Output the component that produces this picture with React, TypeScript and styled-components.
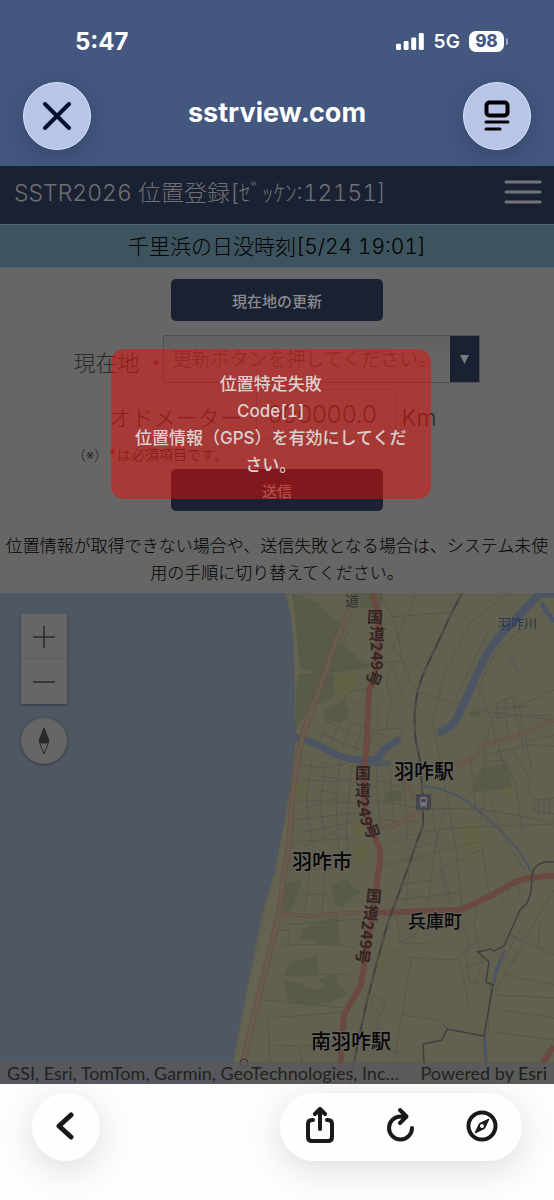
import React from "react";
import styled, { createGlobalStyle } from "styled-components";

const GlobalStyle = createGlobalStyle`
  *, *::before, *::after { box-sizing: border-box; }
  body {
    margin: 0;
    background: #fdfdfd;
    font-family: Inter, "Noto Sans CJK JP", sans-serif;
    font-variant-numeric: tabular-nums;
  }
  button { font-family: inherit; border: 0; padding: 0; cursor: pointer; }
`;

const Screen = styled.div`
  min-height: 100vh;
  display: flex;
  flex-direction: column;
`;

/* Browser chrome, top */
const BrowserTop = styled.header`
  height: 166px;
  background: #43577f;
  color: #fff;
  font-family: Inter, sans-serif;
`;

const StatusBar = styled.div`
  height: 82px;
  padding: 0 50px 0 75px;
  display: flex;
  align-items: center;
  justify-content: space-between;
`;

const Clock = styled.time`
  font-size: 24px;
  font-weight: 700;
  font-variant-numeric: normal;
`;

const StatusIcons = styled.div`
  display: flex;
  align-items: center;
  gap: 9px;
  font-size: 19px;
  font-weight: 600;
`;

const Battery = styled.span`
  position: relative;
  width: 35px;
  height: 21px;
  border-radius: 7px;
  background: #fff;
  color: #43577f;
  font-size: 17px;
  line-height: 21px;
  font-weight: 800;
  text-align: center;
  &::after {
    content: "";
    position: absolute;
    right: -4px;
    top: 7px;
    width: 2px;
    height: 7px;
    border-radius: 0 2px 2px 0;
    background: #9aa8c4;
  }
`;

const AddressRow = styled.div`
  height: 68px;
  padding: 0 23px;
  display: flex;
  align-items: center;
  justify-content: space-between;
`;

const Host = styled.h1`
  margin: 0;
  padding-bottom: 6px;
  font-size: 27px;
  line-height: 32px;
  font-weight: 700;
`;

const GlassButton = styled.button`
  width: 68px;
  height: 68px;
  border-radius: 50%;
  display: grid;
  place-items: center;
  background: #b8c5e6;
  border: 1px solid #d7e6ff;
  color: ${(p) => p.color};
  box-shadow: 0 6px 22px rgba(20, 30, 60, 0.28);
`;

/* Page content, already dimmed while the notice is up */
const Page = styled.main`
  position: relative;
  flex: 1;
  display: flex;
  flex-direction: column;
  background: #666;
`;

const AppBar = styled.div`
  height: 58px;
  padding: 0 12px 4px 14px;
  display: flex;
  align-items: center;
  justify-content: space-between;
  background: #1a2132;
  color: #707072;
`;

const AppTitle = styled.h2`
  margin: 0;
  font-size: 23px;
  line-height: 30px;
  font-weight: 300;
  white-space: nowrap;
`;

const MenuButton = styled.button`
  width: 38px;
  height: 30px;
  background: none;
  color: #737478;
`;

const SunsetBar = styled.div`
  height: 44px;
  border-top: 1px solid #56666c;
  border-bottom: 1px solid #46616c;
  background: #3d545f;
  color: #000;
  font-size: 21px;
  font-weight: 300;
  line-height: 44px;
  text-align: center;
`;

const Form = styled.form`
  padding: 11px 0 0;
  display: flex;
  flex-direction: column;
  align-items: center;
`;

const ActionButton = styled.button`
  width: 212px;
  height: 42px;
  border-radius: 5px;
  background: #1a2132;
  color: #8b8b8e;
  font-size: 15px;
  font-weight: 500;
`;

const FieldRow = styled.div<{ $top: number }>`
  margin-top: ${(p) => p.$top}px;
  display: flex;
  align-items: center;
  color: #2b2b2b;
  font-size: 22px;
  font-weight: 300;
`;

const Label = styled.label`
  line-height: 30px;
  padding-top: 8px;
`;

const Required = styled.span`
  color: #7a1212;
  font-size: 14px;
  line-height: 16px;
`;

const SelectBox = styled.div`
  display: flex;
  width: 317px;
  height: 48px;
  margin-left: 3px;
  border: 1px solid #4f4f4f;
  position: relative;
`;

const Select = styled.select`
  appearance: none;
  flex: 1;
  min-width: 0;
  border: 0;
  border-radius: 0;
  padding: 0 0 0 8px;
  background: linear-gradient(#606060, #666 40%);
  color: #3b3b3b;
  font-family: inherit;
  font-size: 19px;
  font-weight: 300;
`;

const SelectArrow = styled.span`
  position: absolute;
  top: 0;
  right: 0;
  bottom: 0;
  width: 29px;
  display: grid;
  place-items: center;
  background: #1a2132;
  color: #7a7a7d;
  pointer-events: none;
`;

const Odometer = styled.input`
  width: 140px;
  height: 50px;
  margin: 0 6px 0 14px;
  padding: 0 0 0 11px;
  border: 1px solid #575757;
  border-radius: 4px;
  background: #666;
  color: #333;
  font-family: inherit;
  font-size: 24px;
  font-weight: 300;
`;

const Unit = styled.span`
  font-size: 23px;
  padding: 8px 8px 0 0;
`;

const Hint = styled.p`
  width: 410px;
  max-width: 100%;
  margin: 6px 0 4px;
  font-size: 14px;
  line-height: 20px;
  font-weight: 300;
  color: #1c1c1c;
`;

const Note = styled.p`
  margin: 0;
  padding: 22px 4px 6px;
  font-size: 17px;
  line-height: 27px;
  font-weight: 300;
  text-align: center;
  color: #000;
`;

const Toast = styled.div`
  position: absolute;
  top: 183px;
  left: 20%;
  width: 320px;
  padding: 22px 20px 20px;
  border-radius: 13px;
  background: rgba(226, 17, 10, 0.52);
  color: #dccfcf;
  font-size: 17px;
  line-height: 27px;
  font-weight: 500;
  text-align: center;
`;

/* Map */
const MapArea = styled.section`
  position: relative;
  flex: 1;
  min-height: 320px;
  background: #4f5862;
`;

const MapDrawing = styled.svg`
  position: absolute;
  inset: 0;
  width: 100%;
  height: 100%;
`;

const MapControls = styled.div`
  position: absolute;
  top: 21px;
  left: 21px;
  display: flex;
  flex-direction: column;
`;

const MapButton = styled.button<{ $round?: boolean }>`
  width: 46px;
  height: ${(p) => (p.$round ? 46 : 45)}px;
  margin-top: ${(p) => (p.$round ? 14 : 0)}px;
  border-radius: ${(p) => (p.$round ? "50%" : "0")};
  background: #666;
  color: #2a2a2a;
  display: grid;
  place-items: center;
  box-shadow: 0 1px 3px rgba(0, 0, 0, 0.4);
  & + & { border-top: ${(p) => (p.$round ? "0" : "1px solid #545454")}; }
`;

const Attribution = styled.div`
  position: absolute;
  left: 0;
  right: 0;
  bottom: 0;
  height: 22px;
  padding: 0 7px;
  display: flex;
  justify-content: space-between;
  gap: 8px;
  background: rgba(88, 88, 92, 0.78);
  color: #222;
  font-family: Lato, sans-serif;
  font-size: 18px;
  line-height: 22px;
  white-space: nowrap;
`;

const Sources = styled.span`
  overflow: hidden;
  text-overflow: ellipsis;
`;

const EsriLink = styled.a`
  color: #1c1c1c;
  text-decoration: none;
`;

/* Browser chrome, bottom */
const BrowserBottom = styled.footer`
  height: 116px;
  padding: 9px 32px 0;
  display: flex;
  align-items: flex-start;
  justify-content: space-between;
  background: #fdfdfd;
  overflow: hidden;
  color: #191919;
`;

const Pill = styled.div<{ $wide?: boolean }>`
  width: ${(p) => (p.$wide ? 242 : 68)}px;
  height: 68px;
  padding: 0 ${(p) => (p.$wide ? 20 : 14)}px 2px;
  border-radius: 34px;
  display: flex;
  align-items: center;
  justify-content: space-between;
  background: #fefefe;
  box-shadow: 0 8px 34px rgba(0, 0, 0, 0.13);
`;

const ToolButton = styled.button`
  width: 40px;
  height: 40px;
  display: grid;
  place-items: center;
  background: none;
  color: inherit;
`;

const place = {
  fontFamily: "'Noto Sans CJK JP', sans-serif",
  fontWeight: 500,
  fill: "#050505",
};

type Glyph = [string, number, number, number];

const routeLabels: Glyph[] = [
  ["国", 375, 617, 3],
  ["道", 377, 634, 3],
  ["249", 377, 656, 89],
  ["号", 374, 678, 112],
  ["国", 363, 773, 2],
  ["道", 363, 790, 2],
  ["249", 365, 812, 80],
  ["号", 372, 831, 74],
  ["国", 374, 896, 5],
  ["道", 371, 913, 5],
  ["249", 367, 935, 95],
  ["号", 363, 956, 98],
];

const woods = [
  "M292 593 L318 603 L330 616 L342 622 L339 640 L358 658 L370 668 L340 672 L316 672 L300 668 L296 630Z",
  "M352 593 H382 V607 L362 609Z",
  "M298 675 L322 672 L334 674 L334 696 L316 705 L299 722 L296 735 L296 690Z",
  "M325 710 L345 700 L349 715 L340 724 L323 718Z",
  "M384 792 L402 790 L402 801 L386 802Z",
  "M474 780 L482 768 L505 764 L512 788 L474 792Z",
  "M472 709 L481 712 L479 718 L469 715Z",
  "M285 883 L302 880 L292 910 L284 914Z",
  "M331 885 L346 878 L352 888 L362 892 L350 898 L343 908 L334 902Z",
  "M310 926 L338 916 L340 944 L320 944 L308 938 L300 942 L302 930Z",
  "M290 962 L318 955 L318 972 L300 977 L284 976Z",
  "M283 978 L298 984 L316 990 L336 982 L348 994 L330 1002 L305 1006 L287 998Z",
  "M318 980 L332 974 L340 981 L326 986Z",
];

const parks = [
  "M334 674 H356 V692 L334 696Z",
  "M297 784 L306 782 L307 795 L297 795Z",
  "M354 824 L363 822 L364 836 L353 838Z",
  "M354 846 L368 843 L367 863 L355 865Z",
  "M500 789 L511 786 L512 796 L501 797Z",
  "M462 826 L480 822 L482 848 L463 850Z",
  "M380 952 L386 953 L384 968 L378 967Z",
];

const railway = "M462 593 L452 612 L440 638 L425 670 Q416 690 415 710 Q413 735 420 760 L423 800 L423 825 L414 850 L402 885 L388 922 L378 958 L366 1005 L354 1062 L350 1084";

const lanes = [
  "M381 597 L393 617 L399 640 L402 660 L410 680 L418 692 L460 704 L490 712 L554 720",
  "M392 617 L452 612 L471 622 L508 593",
  "M471 622 L446 670 L432 722 L440 760 L448 800 L456 850 L462 905",
  "M488 632 L455 700",
  "M478 688 L492 720 L484 750 L486 790 L480 820",
  "M492 718 L554 690 M545 612 L496 650 L478 688",
  "M416 595 L392 650 M296 612 L318 603 M300 640 L330 640 L345 622",
  "M298 676 L366 664 L402 661 M348 630 L340 652 L358 670",
  "M324 720 L384 748 M331 712 L388 738 M322 734 L366 752 M340 705 L372 719",
  "M329 715 L321 739 M340 719 L332 744 M351 724 L343 748 M362 729 L354 752 M373 733 L365 756",
  "M337 712 L348 692 L366 688 M346 700 L369 706 M376 730 L402 728 L401 740",
  "M378 727 V700 M386 729 L392 700 M390 640 L404 662 M392 668 L402 690 L392 700 L386 682Z",
  "M300 765 L325 768 L352 762 M300 780 L358 782 M297 800 L358 803 M294 820 L362 812 M291 842 L352 838 M289 860 L300 858",
  "M312 762 L306 800 L312 842 M326 762 L320 805 L326 845 M340 760 L336 805 L340 870 M352 765 L346 830 L350 858",
  "M300 810 L350 794 M304 832 L354 822 M303 848 L340 828 M318 776 L350 780 M316 790 L342 794",
  "M376 780 L415 792 M375 800 L418 808 M380 820 L420 822 M376 765 L380 828 M390 770 L394 830 M404 780 L408 845",
  "M382 845 L420 832 L450 828 L554 824 M384 865 L460 846 L480 842",
  "M423 808 L480 809 L554 822 M430 790 L438 850 L452 905 M445 808 L436 842 L428 905",
  "M408 850 L436 842 M405 862 L428 858 M400 885 L430 880 M398 900 L460 892 M409 870 L406 905",
  "M470 755 L476 810 M486 762 L505 760 L516 785 L522 830 M498 750 L512 780 M512 750 L530 778 L528 795",
  "M534 800 L554 798 M532 810 L554 814 M534 798 V812 M539 798 V814 M544 797 V815 M549 797 V816",
  "M497 702 L516 696 L521 715 L496 718Z M497 708 L530 706 M505 698 L508 740 M513 698 L524 750 M521 715 L548 716",
  "M485 755 L530 745 L554 746 M492 725 L505 770 M520 715 L532 770 M554 735 L530 740",
  "M482 848 L490 900 L520 880 M450 905 L440 870 L480 850 M490 800 L505 840 L525 870",
  "M395 905 L400 942 L430 944 M400 942 L416 934 L420 914 M386 948 L412 958 L460 960 L466 990 L470 1012",
  "M430 910 L462 925 L470 945 L465 955 L470 984 L480 982 M460 954 L480 940 M466 968 L484 962",
  "M412 958 L404 1000 L402 1015 L437 1020 L450 1030 M402 1015 L394 1060",
  "M283 945 L340 944 L358 950 M282 975 L350 974 M264 1000 L300 1003 L345 1008 M268 1018 L345 1012",
  "M268 1020 L270 1064 M268 1045 L300 1046 L302 1064 M302 1045 L340 1050",
  "M284 870 L350 868 M284 895 L330 894 M284 925 L360 919 M310 868 L305 912 M325 868 L322 915",
  "M500 1010 L554 1018 M496 995 L554 998 M494 1032 L554 1040 M505 975 L554 985 M520 930 L490 985 L488 1035",
  "M554 890 L510 965 L495 990 M510 935 L554 955 M540 920 L538 950 M500 905 L515 880 L520 895",
  "M372 995 L385 1002 L382 1015 L372 1008Z M378 1012 V1040 M364 1045 L400 1052",
  "M278 930 L290 930 L288 945 M478 900 L474 925 L482 960 L475 985 M508 945 L520 955 L510 965",
];

const coastRoad = "M351 610 Q334 640 328 665 Q318 695 307 722 Q296 755 292 800 Q291 840 284 872 L279 915 L264 975 L243 1062 L238 1084";
const localRoads = "M282 914 L310 916 L345 913 L390 913 M455 765 L471 760 L484 745 L520 735 L554 720 M380 828 Q408 822 420 810 M402 780 Q414 790 413 799";

function MapPicture() {
  return (
    <MapDrawing viewBox="0 593 554 491" preserveAspectRatio="xMidYMid slice" role="img" aria-label="羽咋市周辺の地図">
      <rect x="-600" y="200" width="1800" height="1300" fill="#4f5862" />
      <path d="M285 593 L290 612 L293 640 L295 700 L296 735 L290 790 L275 870 L262 915 L252 965 L243 1010 L229 1084 H1200 V593Z" fill="#626150" />
      <path d="M287 593 L294 625 L297 735 L291 790 L276 872 L252 970 L230 1084 H240 L262 970 L286 870 L299 738 L300 625 L294 593Z" fill="#666451" opacity=".7" />
      {woods.map((d) => <path key={d} d={d} fill="#585b48" />)}
      {parks.map((d) => <path key={d} d={d} fill="#636244" />)}
      <g fill="none" stroke="#57564b" strokeWidth="1">
        {lanes.map((d) => <path key={d} d={d} />)}
      </g>
      <g fill="none" stroke="#4c5563">
        <path d="M294 737 Q315 742 334 754 Q362 764 378 758 Q385 746 400 739" strokeWidth="7" />
        <path d="M360 764 L390 763" strokeWidth="6" opacity=".7" />
        <path d="M438 733 Q452 728 458 716 L480 668 Q486 652 500 636 L540 593" strokeWidth="8" />
        <path d="M534 595 H554 M541 603 L554 622" strokeWidth="5" />
        <path d="M509 654 L519 673" strokeWidth="1" />
        <path d="M424 786 Q460 791 480 812 Q520 845 531 872" strokeWidth="2" />
        <path d="M505 950 Q494 970 494 985 M484 1035 L488 1084" strokeWidth="3" />
      </g>
      <g fill="none" strokeLinejoin="round">
        <path d={coastRoad} stroke="#6a5047" strokeWidth="6" />
        <path d={coastRoad} stroke="#665d50" strokeWidth="4" />
        <path d={localRoads} stroke="#6c5048" strokeWidth="4" />
        <path d={localRoads} stroke="#645e50" strokeWidth="2" />
        <path d="M372 593 L378 612 L378 650 Q376 680 369 690 L366 752 Q361 795 368 820 L380 850 L380 862 L370 930 L361 985 L344 1015 L339 1084" stroke="#6a493f" strokeWidth="6" />
        <path d="M372 913 L460 910 Q492 896 515 882 Q530 876 554 876 M542 1064 L554 1046" stroke="#6a493f" strokeWidth="6" />
      </g>
      <path d={railway} fill="none" stroke="#3f3f3e" strokeWidth="2" />
      <path d={railway} fill="none" stroke="#5a5a50" strokeWidth="1" strokeDasharray="10 10" />
      <path d="M554 862 Q535 860 532 875 Q532 895 527 903 L520 910 L504 946 L494 951 L491 949 L478 952 L489 962 L486 982 L493 985 L484 1036 L447 1029 L442 1040 L423 1044 L424 1064" fill="none" stroke="#3f3f3d" strokeWidth="1.5" />
      <rect x="416" y="794" width="15" height="16" fill="#45454e" />
      <rect x="420" y="797" width="7" height="9" rx="2" fill="#74747a" />
      <rect x="421" y="799" width="5" height="3" fill="#45454e" />
      <path d="M420 808 L422 806 H425 L427 808" stroke="#74747a" fill="none" />
      <circle cx="244" cy="1063" r="4" fill="none" stroke="#333" />
      <g fontFamily="'Noto Sans CJK JP', sans-serif" fontWeight="700" fontSize="16" fill="#352424" textAnchor="middle">
        {routeLabels.map(([t, x, y, a]) => (
          <text key={`${t}${y}`} transform={`translate(${x} ${y}) rotate(${a})`} y="6">{t}</text>
        ))}
      </g>
      <text x="345" y="606" fontSize="14" {...place} fill="#363636">道</text>
      <text x="498" y="628" fontSize="13" {...place} fontWeight={400} fill="#273552">羽咋川</text>
      <g stroke="#66665e" strokeWidth="2" paintOrder="stroke">
        <text x="394" y="779" fontSize="20" {...place}>羽咋駅</text>
        <text x="292" y="869" fontSize="20" {...place}>羽咋市</text>
        <text x="408" y="928" fontSize="18" {...place}>兵庫町</text>
        <text x="311" y="1049" fontSize="20" {...place}>南羽咋駅</text>
      </g>
    </MapDrawing>
  );
}

export default function App() {
  return (
    <Screen>
      <GlobalStyle />
      <BrowserTop>
        <StatusBar>
          <Clock>5:47</Clock>
          <StatusIcons>
            <svg width="28" height="17" viewBox="0 0 28 19" preserveAspectRatio="none" fill="#fff" aria-hidden="true">
              <rect x="0" y="12" width="5" height="7" rx="1.5" />
              <rect x="7.6" y="9" width="5" height="10" rx="1.5" />
              <rect x="15.2" y="5" width="5" height="14" rx="1.5" />
              <rect x="22.8" y="0" width="5" height="19" rx="1.5" />
            </svg>
            <span>5G</span>
            <Battery>98</Battery>
          </StatusIcons>
        </StatusBar>
        <AddressRow>
          <GlassButton type="button" aria-label="閉じる" color="#02112f">
            <svg width="28" height="28" viewBox="0 0 28 28" fill="none" stroke="currentColor" strokeWidth="4" strokeLinecap="round">
              <path d="M2 2 L26 26 M26 2 L2 26" />
            </svg>
          </GlassButton>
          <Host>sstrview.com</Host>
          <GlassButton type="button" aria-label="ページメニュー" color="#000">
            <svg width="26" height="32" viewBox="0 0 26 32" fill="none" stroke="currentColor" strokeLinecap="round">
              <rect x="2.5" y="2.5" width="21" height="13" rx="3" strokeWidth="4" />
              <path d="M2 22 H24 M2 29 H16" strokeWidth="3" />
            </svg>
          </GlassButton>
        </AddressRow>
      </BrowserTop>

      <Page>
        <AppBar>
          <AppTitle>SSTR2026 位置登録[ｾﾞｯｹﾝ:12151]</AppTitle>
          <MenuButton type="button" aria-label="メニュー">
            <svg width="38" height="26" viewBox="0 0 38 26" stroke="currentColor" strokeWidth="3" strokeLinecap="round">
              <path d="M2 3 H36 M2 13 H36 M2 23 H36" />
            </svg>
          </MenuButton>
        </AppBar>
        <SunsetBar>千里浜の日没時刻[5/24 19:01]</SunsetBar>

        <Form onSubmit={(e) => e.preventDefault()}>
          <ActionButton type="button">現在地の更新</ActionButton>
          <FieldRow $top={14}>
            <Label htmlFor="place">現在地&nbsp; <Required>*</Required></Label>
            <SelectBox>
              <Select id="place" defaultValue="">
                <option value="">更新ボタンを押してください。</option>
              </Select>
              <SelectArrow>
                <svg width="9" height="9" viewBox="0 0 9 9" fill="currentColor"><path d="M0 0 H9 L4.5 9Z" /></svg>
              </SelectArrow>
            </SelectBox>
          </FieldRow>
          <FieldRow $top={6}>
            <Label htmlFor="odometer">オドメーター</Label>
            <Odometer id="odometer" defaultValue="000000.0" inputMode="decimal" />
            <Unit>Km</Unit>
          </FieldRow>
          <Hint>（※）<Required>*</Required>は必須項目です。</Hint>
          <ActionButton type="submit">送信</ActionButton>
        </Form>
        <Note>位置情報が取得できない場合や、送信失敗となる場合は、システム未使用の手順に切り替えてください。</Note>

        <MapArea>
          <MapPicture />
          <MapControls>
            <MapButton type="button" aria-label="ズームイン">
              <svg width="22" height="22" viewBox="0 0 22 22" stroke="currentColor" strokeWidth="1.5"><path d="M0 11 H22 M11 0 V22" /></svg>
            </MapButton>
            <MapButton type="button" aria-label="ズームアウト">
              <svg width="22" height="22" viewBox="0 0 22 22" stroke="currentColor" strokeWidth="1.5"><path d="M0 11 H22" /></svg>
            </MapButton>
            <MapButton type="button" aria-label="北を上にする" $round>
              <svg width="12" height="28" viewBox="0 0 12 28" stroke="currentColor">
                <path d="M6 1 L11 14 L6 27 L1 14Z" fill="none" />
                <path d="M6 1 L11 14 L9 16 H3 L1 14Z" fill="currentColor" />
              </svg>
            </MapButton>
          </MapControls>
          <Attribution>
            <Sources>GSI, Esri, TomTom, Garmin, GeoTechnologies, Inc…</Sources>
            <span>Powered by <EsriLink href="#esri">Esri</EsriLink></span>
          </Attribution>
        </MapArea>

        <Toast role="alert">
          位置特定失敗<br />Code[1]<br />位置情報（GPS）を有効にしてください。
        </Toast>
      </Page>

      <BrowserBottom>
        <Pill>
          <ToolButton type="button" aria-label="戻る">
            <svg width="20" height="30" viewBox="0 0 20 30" fill="none" stroke="currentColor" strokeWidth="5" strokeLinecap="round" strokeLinejoin="round">
              <path d="M15 4 L3 15 L15 26" />
            </svg>
          </ToolButton>
        </Pill>
        <Pill $wide>
          <ToolButton type="button" aria-label="共有">
            <svg width="30" height="38" viewBox="0 0 30 38" fill="none" stroke="currentColor" strokeWidth="4" strokeLinecap="round" strokeLinejoin="round">
              <path d="M8 13 H7 Q3 13 3 17 V30 Q3 34 7 34 H23 Q27 34 27 30 V17 Q27 13 23 13 H22" />
              <path d="M15 22 V3 M10 7 L15 2 L20 7" />
            </svg>
          </ToolButton>
          <ToolButton type="button" aria-label="再読み込み">
            <svg width="30" height="38" viewBox="0 0 30 38" fill="none" stroke="currentColor" strokeWidth="4" strokeLinecap="round" strokeLinejoin="round">
              <path d="M26 21 A11.5 11.5 0 1 1 14.500 9.500 H20 M14 3 L20.500 9.500 L14 16" />
            </svg>
          </ToolButton>
          <ToolButton type="button" aria-label="Safariで開く">
            <svg width="32" height="34" viewBox="0 0 32 34" fill="none" stroke="currentColor" strokeWidth="4">
              <circle cx="16" cy="17" r="13.5" />
              <path d="M23 10 L18.5 19.5 L9 24 L13.5 14.5Z" fill="currentColor" strokeWidth="1" strokeLinejoin="round" />
              <circle cx="16" cy="17" r="2" fill="#fefefe" stroke="none" />
            </svg>
          </ToolButton>
        </Pill>
      </BrowserBottom>
    </Screen>
  );
}
